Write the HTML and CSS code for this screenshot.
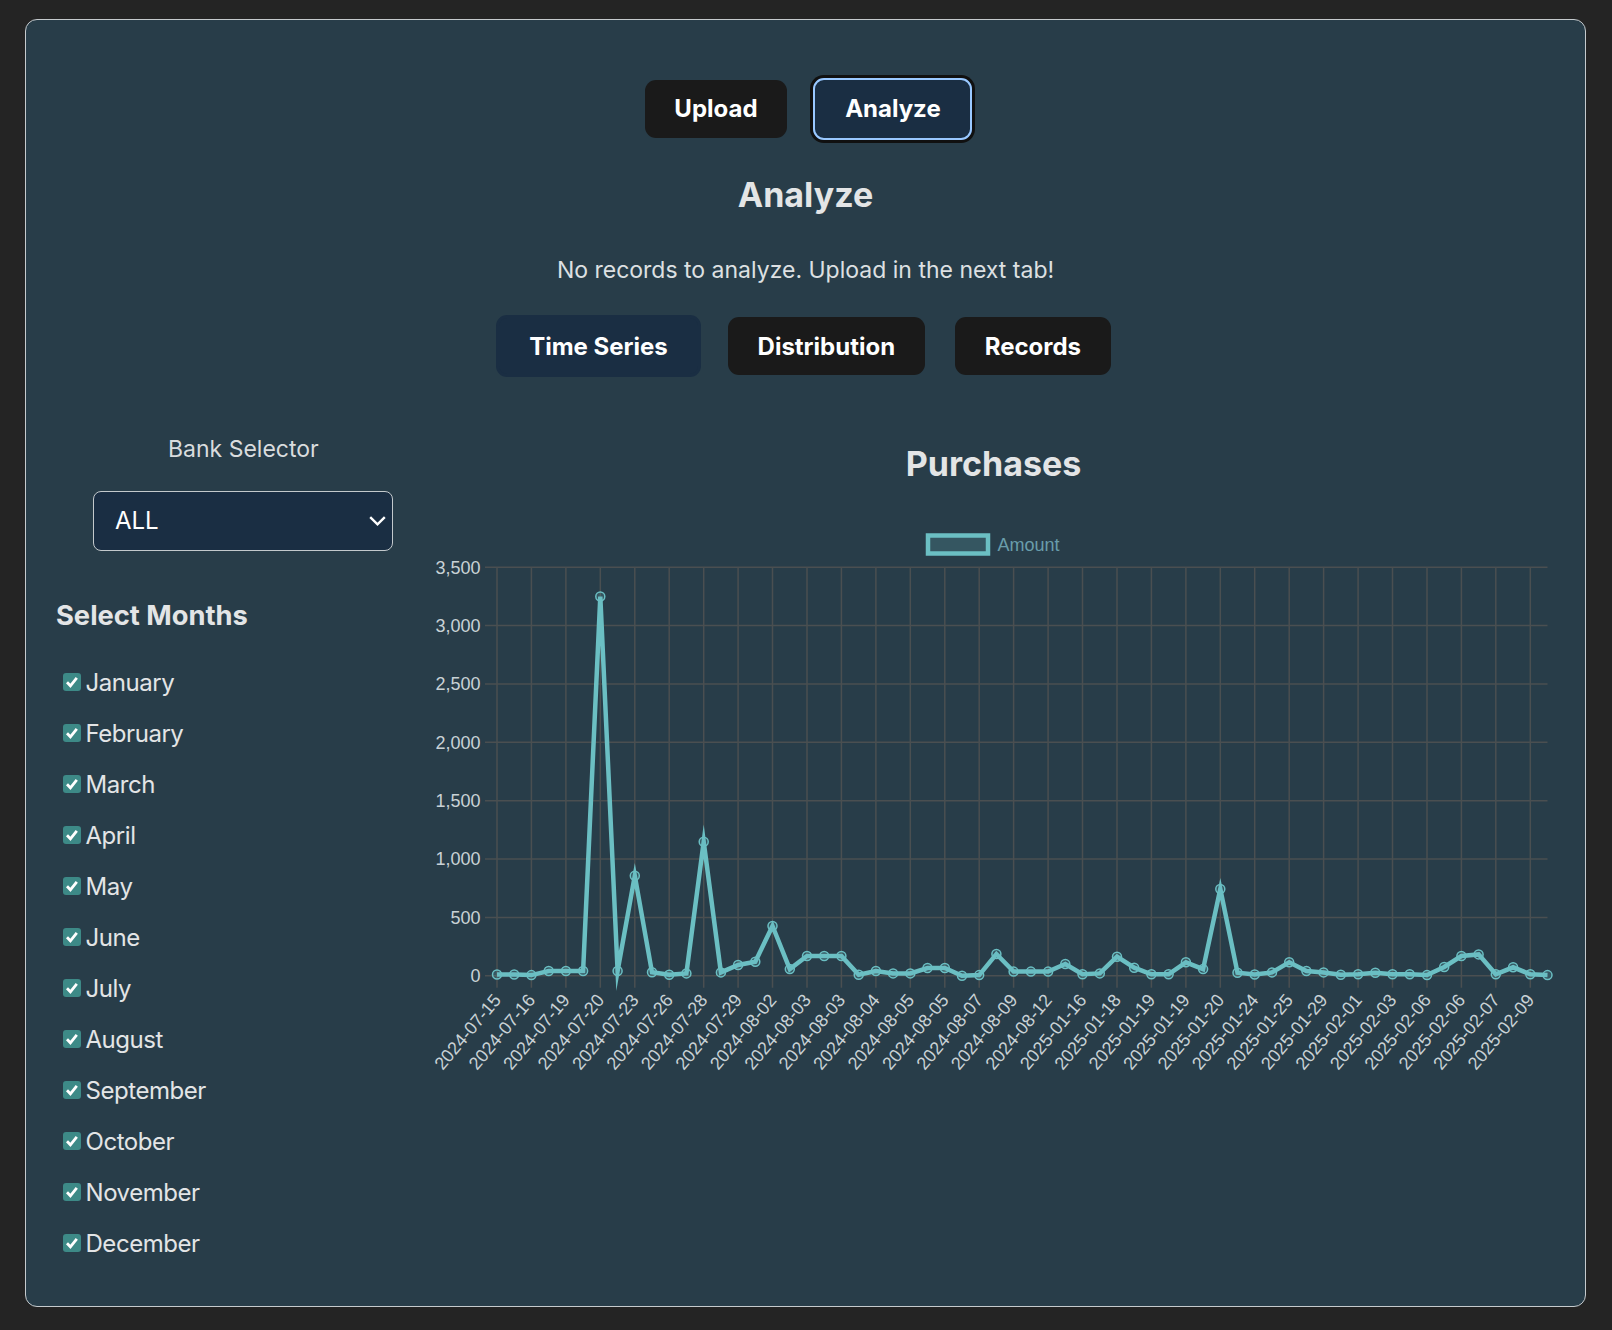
FILE: index.html
```html
<!DOCTYPE html>
<html lang="en">
<head>
<meta charset="utf-8">
<title>Analyze</title>
<link rel="stylesheet" href="styles.css">
</head>
<body>
<main class="card">
  <nav class="nav">
    <button class="btn">Upload</button>
    <button class="btn active focus">Analyze</button>
  </nav>
  <h2 class="title">Analyze</h2>
  <p class="note">No records to analyze. Upload in the next tab!</p>
  <div class="tabs">
    <button class="btn active">Time Series</button>
    <button class="btn">Distribution</button>
    <button class="btn records">Records</button>
  </div>
  <section class="content">
    <aside class="side">
      <div class="bank-label">Bank Selector</div>
      <div class="select">
        <span>ALL</span>
        <svg class="chev" width="17" height="10" viewBox="0 0 17 10"><path d="M1.2 1.2 L8.5 8.3 L15.8 1.2" fill="none" stroke="#fff" stroke-width="2.4"/></svg>
      </div>
      <h3 class="months-title">Select Months</h3>
      <ul class="months">
        <li class="month"><span class="box"><svg viewBox="0 0 16 16"><path d="M3 8.3 L6.4 11.8 L12.8 3.9"/></svg></span>January</li>
        <li class="month"><span class="box"><svg viewBox="0 0 16 16"><path d="M3 8.3 L6.4 11.8 L12.8 3.9"/></svg></span>February</li>
        <li class="month"><span class="box"><svg viewBox="0 0 16 16"><path d="M3 8.3 L6.4 11.8 L12.8 3.9"/></svg></span>March</li>
        <li class="month"><span class="box"><svg viewBox="0 0 16 16"><path d="M3 8.3 L6.4 11.8 L12.8 3.9"/></svg></span>April</li>
        <li class="month"><span class="box"><svg viewBox="0 0 16 16"><path d="M3 8.3 L6.4 11.8 L12.8 3.9"/></svg></span>May</li>
        <li class="month"><span class="box"><svg viewBox="0 0 16 16"><path d="M3 8.3 L6.4 11.8 L12.8 3.9"/></svg></span>June</li>
        <li class="month"><span class="box"><svg viewBox="0 0 16 16"><path d="M3 8.3 L6.4 11.8 L12.8 3.9"/></svg></span>July</li>
        <li class="month"><span class="box"><svg viewBox="0 0 16 16"><path d="M3 8.3 L6.4 11.8 L12.8 3.9"/></svg></span>August</li>
        <li class="month"><span class="box"><svg viewBox="0 0 16 16"><path d="M3 8.3 L6.4 11.8 L12.8 3.9"/></svg></span>September</li>
        <li class="month"><span class="box"><svg viewBox="0 0 16 16"><path d="M3 8.3 L6.4 11.8 L12.8 3.9"/></svg></span>October</li>
        <li class="month"><span class="box"><svg viewBox="0 0 16 16"><path d="M3 8.3 L6.4 11.8 L12.8 3.9"/></svg></span>November</li>
        <li class="month"><span class="box"><svg viewBox="0 0 16 16"><path d="M3 8.3 L6.4 11.8 L12.8 3.9"/></svg></span>December</li>
      </ul>
    </aside>
    <div class="chart">
      <svg class="chart-svg" width="1123.5" height="680" viewBox="430.5 411 1123.5 680">
        <text class="c-title" x="993" y="475.7">Purchases</text>
        <rect class="legend-box" x="927.5" y="535.5" width="60" height="18"/>
        <text class="legend-text" x="997" y="544.5" dy="0.35em">Amount</text>
        <g class="grid">
          <line x1="484.5" x2="1547" y1="975.7" y2="975.7"/>
          <line x1="484.5" x2="1547" y1="917.4" y2="917.4"/>
          <line x1="484.5" x2="1547" y1="859.0" y2="859.0"/>
          <line x1="484.5" x2="1547" y1="800.7" y2="800.7"/>
          <line x1="484.5" x2="1547" y1="742.3" y2="742.3"/>
          <line x1="484.5" x2="1547" y1="684.0" y2="684.0"/>
          <line x1="484.5" x2="1547" y1="625.6" y2="625.6"/>
          <line x1="484.5" x2="1547" y1="567.3" y2="567.3"/>
          <line y1="567.3" y2="987.7" x1="496.5" x2="496.5"/>
          <line y1="567.3" y2="987.7" x1="530.9" x2="530.9"/>
          <line y1="567.3" y2="987.7" x1="565.4" x2="565.4"/>
          <line y1="567.3" y2="987.7" x1="599.8" x2="599.8"/>
          <line y1="567.3" y2="987.7" x1="634.3" x2="634.3"/>
          <line y1="567.3" y2="987.7" x1="668.7" x2="668.7"/>
          <line y1="567.3" y2="987.7" x1="703.2" x2="703.2"/>
          <line y1="567.3" y2="987.7" x1="737.6" x2="737.6"/>
          <line y1="567.3" y2="987.7" x1="772.0" x2="772.0"/>
          <line y1="567.3" y2="987.7" x1="806.5" x2="806.5"/>
          <line y1="567.3" y2="987.7" x1="840.9" x2="840.9"/>
          <line y1="567.3" y2="987.7" x1="875.4" x2="875.4"/>
          <line y1="567.3" y2="987.7" x1="909.8" x2="909.8"/>
          <line y1="567.3" y2="987.7" x1="944.3" x2="944.3"/>
          <line y1="567.3" y2="987.7" x1="978.7" x2="978.7"/>
          <line y1="567.3" y2="987.7" x1="1013.1" x2="1013.1"/>
          <line y1="567.3" y2="987.7" x1="1047.6" x2="1047.6"/>
          <line y1="567.3" y2="987.7" x1="1082.0" x2="1082.0"/>
          <line y1="567.3" y2="987.7" x1="1116.5" x2="1116.5"/>
          <line y1="567.3" y2="987.7" x1="1150.9" x2="1150.9"/>
          <line y1="567.3" y2="987.7" x1="1185.4" x2="1185.4"/>
          <line y1="567.3" y2="987.7" x1="1219.8" x2="1219.8"/>
          <line y1="567.3" y2="987.7" x1="1254.2" x2="1254.2"/>
          <line y1="567.3" y2="987.7" x1="1288.7" x2="1288.7"/>
          <line y1="567.3" y2="987.7" x1="1323.1" x2="1323.1"/>
          <line y1="567.3" y2="987.7" x1="1357.6" x2="1357.6"/>
          <line y1="567.3" y2="987.7" x1="1392.0" x2="1392.0"/>
          <line y1="567.3" y2="987.7" x1="1426.5" x2="1426.5"/>
          <line y1="567.3" y2="987.7" x1="1460.9" x2="1460.9"/>
          <line y1="567.3" y2="987.7" x1="1495.3" x2="1495.3"/>
          <line y1="567.3" y2="987.7" x1="1529.8" x2="1529.8"/>
        </g>
        <g class="ylabels">
          <text x="480" y="975.7" dy="0.35em">0</text>
          <text x="480" y="917.4" dy="0.35em">500</text>
          <text x="480" y="859.0" dy="0.35em">1,000</text>
          <text x="480" y="800.7" dy="0.35em">1,500</text>
          <text x="480" y="742.3" dy="0.35em">2,000</text>
          <text x="480" y="684.0" dy="0.35em">2,500</text>
          <text x="480" y="625.6" dy="0.35em">3,000</text>
          <text x="480" y="567.3" dy="0.35em">3,500</text>
        </g>
        <g class="xlabels">
          <text dy="0.35em" transform="translate(496.5 996.5) rotate(-50)">2024-07-15</text>
          <text dy="0.35em" transform="translate(530.9 996.5) rotate(-50)">2024-07-16</text>
          <text dy="0.35em" transform="translate(565.4 996.5) rotate(-50)">2024-07-19</text>
          <text dy="0.35em" transform="translate(599.8 996.5) rotate(-50)">2024-07-20</text>
          <text dy="0.35em" transform="translate(634.3 996.5) rotate(-50)">2024-07-23</text>
          <text dy="0.35em" transform="translate(668.7 996.5) rotate(-50)">2024-07-26</text>
          <text dy="0.35em" transform="translate(703.2 996.5) rotate(-50)">2024-07-28</text>
          <text dy="0.35em" transform="translate(737.6 996.5) rotate(-50)">2024-07-29</text>
          <text dy="0.35em" transform="translate(772.0 996.5) rotate(-50)">2024-08-02</text>
          <text dy="0.35em" transform="translate(806.5 996.5) rotate(-50)">2024-08-03</text>
          <text dy="0.35em" transform="translate(840.9 996.5) rotate(-50)">2024-08-03</text>
          <text dy="0.35em" transform="translate(875.4 996.5) rotate(-50)">2024-08-04</text>
          <text dy="0.35em" transform="translate(909.8 996.5) rotate(-50)">2024-08-05</text>
          <text dy="0.35em" transform="translate(944.3 996.5) rotate(-50)">2024-08-05</text>
          <text dy="0.35em" transform="translate(978.7 996.5) rotate(-50)">2024-08-07</text>
          <text dy="0.35em" transform="translate(1013.1 996.5) rotate(-50)">2024-08-09</text>
          <text dy="0.35em" transform="translate(1047.6 996.5) rotate(-50)">2024-08-12</text>
          <text dy="0.35em" transform="translate(1082.0 996.5) rotate(-50)">2025-01-16</text>
          <text dy="0.35em" transform="translate(1116.5 996.5) rotate(-50)">2025-01-18</text>
          <text dy="0.35em" transform="translate(1150.9 996.5) rotate(-50)">2025-01-19</text>
          <text dy="0.35em" transform="translate(1185.4 996.5) rotate(-50)">2025-01-19</text>
          <text dy="0.35em" transform="translate(1219.8 996.5) rotate(-50)">2025-01-20</text>
          <text dy="0.35em" transform="translate(1254.2 996.5) rotate(-50)">2025-01-24</text>
          <text dy="0.35em" transform="translate(1288.7 996.5) rotate(-50)">2025-01-25</text>
          <text dy="0.35em" transform="translate(1323.1 996.5) rotate(-50)">2025-01-29</text>
          <text dy="0.35em" transform="translate(1357.6 996.5) rotate(-50)">2025-02-01</text>
          <text dy="0.35em" transform="translate(1392.0 996.5) rotate(-50)">2025-02-03</text>
          <text dy="0.35em" transform="translate(1426.5 996.5) rotate(-50)">2025-02-06</text>
          <text dy="0.35em" transform="translate(1460.9 996.5) rotate(-50)">2025-02-06</text>
          <text dy="0.35em" transform="translate(1495.3 996.5) rotate(-50)">2025-02-07</text>
          <text dy="0.35em" transform="translate(1529.8 996.5) rotate(-50)">2025-02-09</text>
        </g>
        <polyline class="series" points="496.5,974.5 513.7,974.5 530.9,975.1 548.2,971.0 565.4,971.0 582.6,971.0 599.8,596.5 617.1,971.0 634.3,875.7 651.5,972.3 668.7,974.8 685.9,973.4 703.2,841.8 720.4,972.4 737.6,965.0 754.8,961.7 772.0,926.0 789.3,969.1 806.5,956.0 823.7,956.0 840.9,956.0 858.2,974.8 875.4,971.0 892.6,973.4 909.8,973.4 927.0,968.0 944.3,968.0 961.5,975.7 978.7,975.1 995.9,954.0 1013.1,971.6 1030.4,971.6 1047.6,971.6 1064.8,964.0 1082.0,974.3 1099.3,973.4 1116.5,956.7 1133.7,967.7 1150.9,974.3 1168.1,974.3 1185.4,962.3 1202.6,969.1 1219.8,889.0 1237.0,972.7 1254.2,974.5 1271.5,972.4 1288.7,962.3 1305.9,971.0 1323.1,972.4 1340.3,974.8 1357.6,974.3 1374.8,972.8 1392.0,974.3 1409.2,974.3 1426.5,975.1 1443.7,967.0 1460.9,956.0 1478.1,954.4 1495.3,974.3 1512.6,967.3 1529.8,974.3 1547.0,975.1"/>
        <g class="pts">
          <circle cx="496.5" cy="974.5" r="4.5"/><circle cx="513.7" cy="974.5" r="4.5"/><circle cx="530.9" cy="975.1" r="4.5"/><circle cx="548.2" cy="971.0" r="4.5"/><circle cx="565.4" cy="971.0" r="4.5"/><circle cx="582.6" cy="971.0" r="4.5"/><circle cx="599.8" cy="596.5" r="4.5"/><circle cx="617.1" cy="971.0" r="4.5"/><circle cx="634.3" cy="875.7" r="4.5"/><circle cx="651.5" cy="972.3" r="4.5"/>
          <circle cx="668.7" cy="974.8" r="4.5"/><circle cx="685.9" cy="973.4" r="4.5"/><circle cx="703.2" cy="841.8" r="4.5"/><circle cx="720.4" cy="972.4" r="4.5"/><circle cx="737.6" cy="965.0" r="4.5"/><circle cx="754.8" cy="961.7" r="4.5"/><circle cx="772.0" cy="926.0" r="4.5"/><circle cx="789.3" cy="969.1" r="4.5"/><circle cx="806.5" cy="956.0" r="4.5"/><circle cx="823.7" cy="956.0" r="4.5"/>
          <circle cx="840.9" cy="956.0" r="4.5"/><circle cx="858.2" cy="974.8" r="4.5"/><circle cx="875.4" cy="971.0" r="4.5"/><circle cx="892.6" cy="973.4" r="4.5"/><circle cx="909.8" cy="973.4" r="4.5"/><circle cx="927.0" cy="968.0" r="4.5"/><circle cx="944.3" cy="968.0" r="4.5"/><circle cx="961.5" cy="975.7" r="4.5"/><circle cx="978.7" cy="975.1" r="4.5"/><circle cx="995.9" cy="954.0" r="4.5"/>
          <circle cx="1013.1" cy="971.6" r="4.5"/><circle cx="1030.4" cy="971.6" r="4.5"/><circle cx="1047.6" cy="971.6" r="4.5"/><circle cx="1064.8" cy="964.0" r="4.5"/><circle cx="1082.0" cy="974.3" r="4.5"/><circle cx="1099.3" cy="973.4" r="4.5"/><circle cx="1116.5" cy="956.7" r="4.5"/><circle cx="1133.7" cy="967.7" r="4.5"/><circle cx="1150.9" cy="974.3" r="4.5"/><circle cx="1168.1" cy="974.3" r="4.5"/>
          <circle cx="1185.4" cy="962.3" r="4.5"/><circle cx="1202.6" cy="969.1" r="4.5"/><circle cx="1219.8" cy="889.0" r="4.5"/><circle cx="1237.0" cy="972.7" r="4.5"/><circle cx="1254.2" cy="974.5" r="4.5"/><circle cx="1271.5" cy="972.4" r="4.5"/><circle cx="1288.7" cy="962.3" r="4.5"/><circle cx="1305.9" cy="971.0" r="4.5"/><circle cx="1323.1" cy="972.4" r="4.5"/><circle cx="1340.3" cy="974.8" r="4.5"/>
          <circle cx="1357.6" cy="974.3" r="4.5"/><circle cx="1374.8" cy="972.8" r="4.5"/><circle cx="1392.0" cy="974.3" r="4.5"/><circle cx="1409.2" cy="974.3" r="4.5"/><circle cx="1426.5" cy="975.1" r="4.5"/><circle cx="1443.7" cy="967.0" r="4.5"/><circle cx="1460.9" cy="956.0" r="4.5"/><circle cx="1478.1" cy="954.4" r="4.5"/><circle cx="1495.3" cy="974.3" r="4.5"/><circle cx="1512.6" cy="967.3" r="4.5"/>
          <circle cx="1529.8" cy="974.3" r="4.5"/><circle cx="1547.0" cy="975.1" r="4.5"/>
        </g>
      </svg>
    </div>
  </section>
</main>
</body>
</html>
```

FILE: styles.css
```css
* {
  box-sizing: border-box;
}

html,
body {
  margin: 0;
}

body {
  background: #242424;
  padding: 19px 26px 23px 25px;
  font-family: Inter, "Noto Sans", sans-serif;
  color: rgba(255, 255, 255, 0.87);
}

.card {
  border: 1px solid #c5cacd;
  border-radius: 12px;
  background: #283d49;
  padding: 30px;
}

.nav {
  display: flex;
  justify-content: center;
  align-items: center;
  gap: 26px;
  margin-top: 28px;
  padding-left: 6px;
}

.btn {
  font-family: Inter, "Noto Sans", sans-serif;
  font-size: 24px;
  line-height: 27px;
  font-weight: 700;
  color: #ffffff;
  background: #1a1a1a;
  border: 1px solid transparent;
  border-radius: 11px;
  padding: 14.4px 28.8px;
  margin: 0;
  cursor: pointer;
}

.btn.active {
  background: #1a2e43;
  border: 3px solid #1a2e43;
}

.btn.focus {
  outline: 2.5px solid #99c8ff;
  outline-offset: -2.5px;
  box-shadow: 0 0 0 3px #101010;
}

.title {
  font-size: 34px;
  line-height: 40px;
  font-weight: 700;
  text-align: center;
  margin: 35px 0 0;
  color: #e3e5e6;
}

.note {
  font-size: 23px;
  line-height: 30px;
  text-align: center;
  margin: 40.5px 0 0;
  color: #dde0e2;
}

.tabs {
  display: flex;
  justify-content: center;
  align-items: center;
  gap: 27px;
  margin-top: 30px;
  padding-right: 4px;
}

.tabs .btn.active {
  padding: 14.4px 30px;
}

.tabs .records {
  margin-left: 3px;
}

.content {
  display: grid;
  grid-template-columns: 1fr 3fr;
  margin-top: 34px;
}

.side {
  display: flex;
  flex-direction: column;
  align-items: center;
}

.bank-label {
  font-size: 23px;
  line-height: 28px;
  margin-top: 24px;
  color: #d9dcde;
}

.select {
  width: 300px;
  height: 60.4px;
  margin-top: 27.7px;
  display: flex;
  align-items: center;
  justify-content: space-between;
  padding: 0 6px 0 20.5px;
  border: 1px solid #c3c9cc;
  border-radius: 8px;
  background: #1a2e43;
  font-size: 24px;
  line-height: 29px;
  color: #ffffff;
}

.chev {
  display: block;
}

.months-title {
  align-self: stretch;
  font-size: 27.3px;
  line-height: 33px;
  font-weight: 700;
  margin: 47.8px 0 0;
  color: #e3e5e6;
}

.months {
  align-self: stretch;
  list-style: none;
  margin: 36.5px 0 18px;
  padding: 0 0 0 7px;
  display: flex;
  flex-direction: column;
  gap: 22px;
}

.month {
  display: flex;
  align-items: center;
  height: 29px;
  font-size: 24px;
  line-height: 29px;
  letter-spacing: -0.45px;
  color: #e3e5e6;
}

.box {
  width: 17.5px;
  height: 17.5px;
  flex: none;
  border-radius: 3px;
  background: #3d8a87;
  margin: -2px 5px 0 0;
  display: flex;
  align-items: center;
  justify-content: center;
}

.box svg {
  width: 16px;
  height: 16px;
  display: block;
}

.box path {
  fill: none;
  stroke: #ffffff;
  stroke-width: 2.8;
}

.chart {
  min-width: 0;
}

.chart-svg {
  display: block;
}

.c-title {
  font-family: Inter, "Noto Sans", sans-serif;
  font-size: 34px;
  font-weight: 700;
  fill: #e3e5e6;
  text-anchor: middle;
}

.legend-box {
  fill: rgba(107, 191, 195, 0.2);
  stroke: #6bbfc3;
  stroke-width: 4.5;
}

.legend-text {
  font-family: "Liberation Sans", Arial, sans-serif;
  font-size: 18px;
  fill: #6a9dab;
}

.grid line {
  stroke: #4a4f51;
  stroke-width: 1.5;
}

.ylabels text {
  font-family: "Liberation Sans", Arial, sans-serif;
  font-size: 18px;
  fill: #c9d2d6;
  text-anchor: end;
}

.xlabels text {
  font-family: "Liberation Sans", Arial, sans-serif;
  font-size: 18px;
  fill: #c9d2d6;
  text-anchor: end;
}

.series {
  fill: none;
  stroke: #6bbfc3;
  stroke-width: 4.5;
  stroke-linejoin: miter;
  stroke-miterlimit: 10;
}

.pts circle {
  fill: rgba(107, 191, 195, 0.2);
  stroke: #6bbfc3;
  stroke-width: 1.5;
}
```
